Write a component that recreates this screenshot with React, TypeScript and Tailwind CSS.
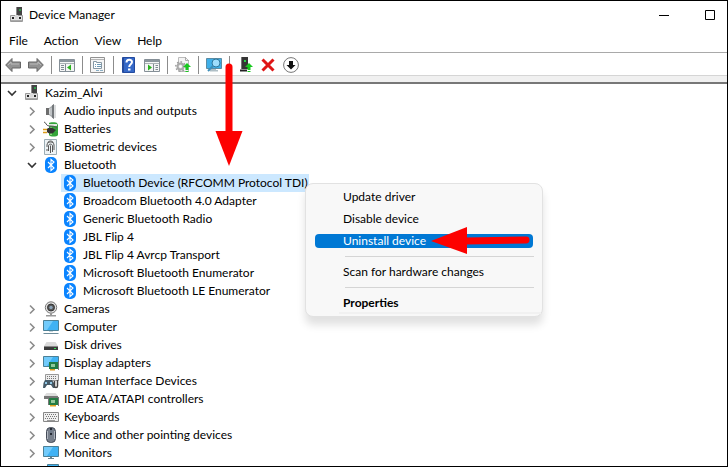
import { useState, type ReactNode } from 'react';

type IconProps = { children: ReactNode; className?: string };

function Icon({ children, className = 'size-4' }: IconProps) {
	return (
		<svg viewBox="0 0 16 16" fill="none" aria-hidden="true" className={`${className} shrink-0`}>
			{children}
		</svg>
	);
}

function ComputerTowerIcon() {
	return (
		<Icon>
			<path d="M7 0h6v9H7z" fill="#444" />
			<path d="M7 0h1v9H7z" fill="#8b8b8b" />
			<path d="M10 2h2v2h-2z" fill="#2f9d4a" />
			<path d="M1.500 8.500h12v6h-12z" fill="#e3e3e3" stroke="#9a9a9a" />
			<path d="M3 10h2v2H3zM10 10h2v2h-2z" fill="#222" />
			<path d="M6 8h3v4H6z" fill="#d9d9d9" />
			<path d="M2 13h11v1H2z" fill="#aaa" />
		</Icon>
	);
}

function SpeakerIcon() {
	return (
		<Icon>
			<path d="M3 5h3v7H3z" fill="#6d6d6d" />
			<path d="M6 5l5-4v15l-5-4z" fill="#a9adb0" />
			<path d="M9 2.500L11 1v15l-2-1.500z" fill="#74787b" />
			<path d="M6.500 6v5M8 5v7" stroke="#d6d9db" />
			<path d="M12 2v13" stroke="#b9bcbe" />
		</Icon>
	);
}

function BatteryIcon() {
	return (
		<Icon>
			<path d="M6 2c0-1 8-1 8 0l1 2v10c-1 2-8 2-9 0V4z" fill="#35a53b" />
			<path d="M6 3h8v2H6z" fill="#dfe8df" />
			<path d="M7 6h2v8H7z" fill="#86d978" />
			<path d="M1 1c2 0 2 4 5 4s6 0 8 2" stroke="#555" />
			<path d="M4 8c2-2 6-1 7 0l2 1-2 2c-1 2-5 2-7 0z" fill="#333" />
			<path d="M0 8.500h4M0 11.500h4" stroke="#dc9c1a" strokeWidth="1.500" />
		</Icon>
	);
}

function FingerprintIcon() {
	return (
		<Icon>
			<path d="M1.500.5h12v15h-12z" fill="#eef3f5" stroke="#9cadb5" />
			<path
				d="M4 8V6c0-4 7-4 7 0v5M5.500 12V7c0-2.500 4-2.500 4 0v6M7.500 6.500V14M4 10v2M4.500 3.500c2-2 4-2 6 0"
				stroke="#585858"
			/>
		</Icon>
	);
}

function BluetoothIcon() {
	return (
		<Icon>
			<rect x="2" width="12" height="16" rx="5" fill="#0a84ff" />
			<path d="M5 5l6 6-3 2.500v-11L11 5l-6 6" stroke="#fff" strokeWidth="1.100" />
		</Icon>
	);
}

function CameraIcon() {
	return (
		<Icon>
			<circle cx="8" cy="6.500" r="5.700" fill="#e1e1e1" stroke="#777" />
			<circle cx="8" cy="6.500" r="3.500" fill="#555" stroke="#333" />
			<circle cx="8" cy="6.500" r="1.700" fill="#8ba3b9" />
			<path d="M7 12h2v2h4v1.500H3V14h4z" fill="#999" />
		</Icon>
	);
}

function Screen() {
	return (
		<>
			<path d="M.5 1.500h15v10H.5z" fill="#3fb2f4" stroke="#4b8096" />
			<path d="M1 2h9l-6 9H1z" fill="#72cbfb" />
		</>
	);
}

function DesktopIcon() {
	return (
		<Icon>
			<Screen />
			<path d="M6 12h4v1H6z" fill="#c5d5dc" />
			<path d="M1 14h14l1 1H0z" fill="#6d8c9a" />
		</Icon>
	);
}

function MonitorIcon() {
	return (
		<Icon>
			<Screen />
			<path d="M7 12h2v1h2v1H5v-1h2z" fill="#66838f" />
		</Icon>
	);
}

function NetworkIcon() {
	return (
		<Icon>
			<path d="M4.500 1.500h11v9h-11z" fill="#3fb2f4" stroke="#4b8096" />
			<path d="M9 11h2v2H9zM6 13h8v1H6z" fill="#66838f" />
		</Icon>
	);
}

function DiskIcon() {
	return (
		<Icon>
			<path d="M3.500 5h9L15 9H1z" fill="#dadada" />
			<path d="M1 9h14v4H1z" fill="#3b3b3b" />
			<path d="M1 9h14v1H1z" fill="#888" />
			<path d="M11 11h2v1h-2z" fill="#36e052" />
		</Icon>
	);
}

function DisplayAdapterIcon() {
	return (
		<Icon>
			<Screen />
			<path d="M6 7h9v7H6z" fill="#207b43" />
			<path d="M8 9h4v3H8z" fill="#8ec79b" />
			<path d="M15 6h1v9h-1z" fill="#777" />
			<path d="M7 14h5v1.500H7z" fill="#dc9820" />
		</Icon>
	);
}

function GamepadIcon() {
	return (
		<Icon>
			<path d="M2.500 1.500h13v6h-13z" fill="#eee" stroke="#999" />
			<path d="M4 3.500h10M4 5.500h10" stroke="#777" strokeDasharray="1 1" />
			<path d="M2 7h7l2 3 1 5h-2l-2-3H4l-2 3H0l.500-5z" fill="#465b68" />
			<path d="M2 9h2v2H2zM7 9h2v2H7z" fill="#8fc6e5" />
			<path d="M11.500 8v5c0 2 3 2 3 0V7" stroke="#444" strokeWidth="1.500" />
		</Icon>
	);
}

function ControllerCardIcon() {
	return (
		<Icon>
			<path d="M3.500 2h9L15 5H1z" fill="#ddd" />
			<path d="M1 5h14v3H1z" fill="#777" />
			<path d="M6 7h9v7H6z" fill="#237b43" />
			<path d="M8 9h4v3H8z" fill="#95c89c" />
			<path d="M4 6h2v8H5V7H4zM15 6h1v9h-1z" fill="#777" />
			<path d="M7 14h6v1.500H7z" fill="#e2a020" />
		</Icon>
	);
}

function KeyboardIcon() {
	return (
		<Icon>
			<path d="M.5 3.500h15v9H.5z" fill="#f0f0f0" stroke="#888" />
			<path d="M2 5.500h12M3 7.500h11M2 9.500h12" stroke="#777" strokeDasharray="1 1" />
			<path d="M4 11.500h8" stroke="#999" />
		</Icon>
	);
}

function MouseIcon() {
	return (
		<Icon>
			<rect x="3.500" y=".5" width="9" height="15" rx="4" fill="#777f8b" stroke="#444b57" />
			<path d="M4.500 4v8M11.500 4v8" stroke="#b0b6bf" />
			<path d="M8 1v7" stroke="#262b35" strokeWidth="2" />
			<path d="M8 3v3" stroke="#b7c8dc" />
		</Icon>
	);
}

function ArrowIcon({ flip = false }: { flip?: boolean }) {
	return (
		<Icon className={flip ? 'size-4 -scale-x-100' : 'size-4'}>
			<path d="M.7 8L7 1.500V5h8.500v6H7v3.500z" fill="#929292" stroke="#666" />
			<path d="M3 8l3-3v2h8" stroke="#b9b9b9" />
		</Icon>
	);
}

function ConsoleTreeIcon({ flip = false }: { flip?: boolean }) {
	return (
		<Icon>
			<path d="M.5 2.500h15v12H.5z" fill="#f4f5f5" stroke="#858f97" />
			<path d="M1 3h14v2H1z" fill="#8b969d" />
			<path d="M1 6.500h14" stroke="#aab1b5" />
			{flip ? (
				<>
					<path d="M9.500 7v7M11.500 8.500H14M11.500 10.500H14M11.500 12.500H14" stroke="#7f8a92" />
					<path d="M4 7.500l4 3-4 3z" fill="#29b21e" />
				</>
			) : (
				<>
					<path d="M6.500 7v7M2 8.500h3M2 10.500h3M2 12.500h3" stroke="#7f8a92" />
					<path d="M12 7.500l-4 3 4 3z" fill="#29b21e" />
				</>
			)}
		</Icon>
	);
}

function PropertiesIcon() {
	return (
		<Icon>
			<path d="M.5.5h14v15H.5z" fill="#f6f6f6" stroke="#929292" />
			<path d="M1 2.500h13" stroke="#b5b5b5" />
			<path d="M3.500 4.500h3v1h5v6h-8z" fill="#fff" stroke="#8798a4" />
			<path d="M5 7.500h1M7 7.500h4M5 9.500h1M7 9.500h4" stroke="#6f9bb7" />
			<path d="M6 13.500h3M10 13.500h3" stroke="#8aaec4" />
		</Icon>
	);
}

function HelpIcon() {
	return (
		<Icon>
			<path d="M1.500.5h12v15h-12z" fill="#3568c7" stroke="#234a9e" />
			<path d="M2 1h1v14H2z" fill="#284b98" />
			<path d="M5.500 5.500C5.500 2 11 2 11 5c0 2.200-2.800 2.200-2.800 5" stroke="#fff" strokeWidth="2" />
			<path d="M7 11.500h2.500v2H7z" fill="#fff" />
		</Icon>
	);
}

function GreenUpload() {
	return (
		<>
			<path d="M12 6l4 4h-2.500v2h-3v-2H8z" fill="#18c91e" />
			<path d="M10.500 12.500h3M10.500 14.500h3" stroke="#18c91e" />
		</>
	);
}

function UpdateDriverIcon() {
	return (
		<Icon>
			<path d="M3.500.5h7l3 3v11h-10z" fill="#f4f4f4" stroke="#bbb" />
			<path d="M10.500 0v3.500H14" stroke="#aaa" />
			<circle cx="5.500" cy="9.500" r="3" fill="#ddd" stroke="#aaa" strokeWidth="2" />
			<circle cx="5.500" cy="9.500" r="4.700" stroke="#999" strokeWidth="1.400" strokeDasharray="1.600 2" />
			<circle cx="5.500" cy="9.500" r="1.200" fill="#fff" />
			<GreenUpload />
		</Icon>
	);
}

function ScanHardwareIcon() {
	return (
		<Icon>
			<path d="M.5 1.500h15v10H.5z" fill="#3eafe9" stroke="#5b8ca4" />
			<path d="M5 12h5v1h2v1.500H4V13h1z" fill="#b0bfc6" />
			<circle cx="10" cy="6" r="4" fill="#9dddfc" stroke="#2d779d" />
			<path d="M7 9l-5 5" stroke="#3d8eb8" strokeWidth="2" />
		</Icon>
	);
}

function AddDriverIcon() {
	return (
		<Icon>
			<path d="M4 0h7v12H4z" fill="#353535" />
			<path d="M4 0h1v12H4z" fill="#777" />
			<path d="M7 3h2v2H7z" fill="#29d346" />
			<path d="M3 13.500h7" stroke="#222" strokeWidth="2" />
			<GreenUpload />
		</Icon>
	);
}

function RemoveIcon() {
	return (
		<Icon>
			<path d="M2.500 2.500l11 11M13.500 2.500l-11 11" stroke="#df1515" strokeWidth="3" />
		</Icon>
	);
}

function DisableIcon() {
	return (
		<Icon>
			<circle cx="8" cy="8" r="7.400" fill="#fff" stroke="#777" />
			<path d="M6 4h4v4h2.500L8 12.500 3.500 8H6z" fill="#111" />
		</Icon>
	);
}

function Chevron({ open }: { open: boolean }) {
	return (
		<Icon>
			{open ? (
				<path d="M4 6l4 4 4-4" stroke="#333" strokeWidth="1.600" />
			) : (
				<path d="M6 4.500l4 4-4 4" stroke="#8c8c8c" strokeWidth="1.600" />
			)}
		</Icon>
	);
}

type Category = { name: string; icon: ReactNode; devices?: string[] };

const categories: Category[] = [
	{ name: 'Audio inputs and outputs', icon: <SpeakerIcon /> },
	{ name: 'Batteries', icon: <BatteryIcon /> },
	{ name: 'Biometric devices', icon: <FingerprintIcon /> },
	{
		name: 'Bluetooth',
		icon: <BluetoothIcon />,
		devices: [
			'Bluetooth Device (RFCOMM Protocol TDI)',
			'Broadcom Bluetooth 4.0 Adapter',
			'Generic Bluetooth Radio',
			'JBL Flip 4',
			'JBL Flip 4 Avrcp Transport',
			'Microsoft Bluetooth Enumerator',
			'Microsoft Bluetooth LE Enumerator',
		],
	},
	{ name: 'Cameras', icon: <CameraIcon /> },
	{ name: 'Computer', icon: <DesktopIcon /> },
	{ name: 'Disk drives', icon: <DiskIcon /> },
	{ name: 'Display adapters', icon: <DisplayAdapterIcon /> },
	{ name: 'Human Interface Devices', icon: <GamepadIcon /> },
	{ name: 'IDE ATA/ATAPI controllers', icon: <ControllerCardIcon /> },
	{ name: 'Keyboards', icon: <KeyboardIcon /> },
	{ name: 'Mice and other pointing devices', icon: <MouseIcon /> },
	{ name: 'Monitors', icon: <MonitorIcon /> },
];

const tools: { label: string; icon: ReactNode; divider?: boolean }[] = [
	{ label: 'Back', icon: <ArrowIcon /> },
	{ label: 'Forward', icon: <ArrowIcon flip />, divider: true },
	{ label: 'Show console tree', icon: <ConsoleTreeIcon />, divider: true },
	{ label: 'Properties', icon: <PropertiesIcon />, divider: true },
	{ label: 'Help', icon: <HelpIcon /> },
	{ label: 'Show action pane', icon: <ConsoleTreeIcon flip />, divider: true },
	{ label: 'Update driver', icon: <UpdateDriverIcon />, divider: true },
	{ label: 'Scan for hardware changes', icon: <ScanHardwareIcon />, divider: true },
	{ label: 'Add drivers', icon: <AddDriverIcon /> },
	{ label: 'Uninstall device', icon: <RemoveIcon /> },
	{ label: 'Disable device', icon: <DisableIcon /> },
];

function TitleBar() {
	return (
		<header className="flex h-7 items-center pl-2 pr-3">
			<ComputerTowerIcon />
			<h1 className="ml-1 flex-1">Device Manager</h1>
			<button type="button" aria-label="Minimize" className="mr-9">
				<svg viewBox="0 0 10 10" className="size-[10px]">
					<path d="M0 5.500h10" stroke="#000" />
				</svg>
			</button>
			<button type="button" aria-label="Maximize">
				<svg viewBox="0 0 10 10" className="size-[10px]">
					<path d="M.5.5h9v9h-9z" fill="none" stroke="#000" />
				</svg>
			</button>
		</header>
	);
}

function Toolbar() {
	return (
		<div className="flex h-6 shrink-0 items-center gap-[7px] border-y border-t-[#a9a9a9] border-b-[#d5d5d5] pl-1 pt-px">
			{tools.map((tool) => (
				<div key={tool.label} className="flex items-center gap-[7px]">
					<button type="button" aria-label={tool.label}>
						{tool.icon}
					</button>
					{tool.divider && <span className="h-[18px] w-px bg-[#8c8c8c]" />}
				</div>
			))}
		</div>
	);
}

function CategoryItem({ category }: { category: Category }) {
	const [open, setOpen] = useState(Boolean(category.devices));

	return (
		<li>
			<div className="flex h-[18px] items-center">
				<button
					type="button"
					aria-label={`Toggle ${category.name}`}
					aria-expanded={open}
					onClick={() => setOpen(!open)}
					className="mr-[3px]"
				>
					<Chevron open={open} />
				</button>
				{category.icon}
				<span className="ml-[5px]">{category.name}</span>
			</div>
			{open && category.devices && (
				<ul className="pl-[37px]">
					{category.devices.map((device, index) => (
						<li
							key={device}
							className={
								index === 0
									? 'flex h-[18px] w-fit items-center bg-[#cce8ff] px-px'
									: 'flex h-[18px] w-fit items-center px-px'
							}
						>
							<BluetoothIcon />
							<span className="ml-[5px]">{device}</span>
						</li>
					))}
				</ul>
			)}
		</li>
	);
}

function DeviceTree() {
	return (
		<main className="min-h-0 flex-1 overflow-hidden whitespace-nowrap pl-[3px]">
			<div className="flex h-[18px] items-center">
				<button type="button" aria-label="Toggle Kazim_Alvi" className="mr-1">
					<Chevron open />
				</button>
				<ComputerTowerIcon />
				<span className="ml-[5px]">Kazim_Alvi</span>
			</div>
			<ul className="pl-5">
				{categories.map((category) => (
					<CategoryItem key={category.name} category={category} />
				))}
			</ul>
			<div className="flex h-[18px] items-center pl-[39px]">
				<NetworkIcon />
			</div>
		</main>
	);
}

function ContextMenu() {
	return (
		<div
			role="menu"
			className="absolute left-[304px] top-[182px] w-[238px] rounded-lg border border-[#e2e2e2] bg-[#f8f8f8] px-[9px] pb-[2px] pt-[2px] shadow-[0_8px_8px_rgba(0,0,0,0.12)]"
		>
			<button type="button" role="menuitem" className="flex h-[22px] w-full items-center pl-7">
				Update driver
			</button>
			<button type="button" role="menuitem" className="flex h-[22px] w-full items-center pl-7">
				Disable device
			</button>
			<button
				type="button"
				role="menuitem"
				className="mb-2 mt-1 flex h-[14px] w-full items-center rounded bg-[#0078d4] pl-7 text-white"
			>
				Uninstall device
			</button>
			<hr className="-mr-px ml-[30px] border-[#d5d5d5]" />
			<button type="button" role="menuitem" className="flex h-[30px] w-full items-center pl-7">
				Scan for hardware changes
			</button>
			<hr className="-mr-px ml-[30px] border-[#d5d5d5]" />
			<button type="button" role="menuitem" className="flex h-6 w-full items-center pl-7 pt-[6px] font-bold">
				Properties
			</button>
			<div className="-mr-2 ml-6 h-[2px] bg-[#f1f1f1]" />
		</div>
	);
}

function Annotations() {
	return (
		<svg
			viewBox="0 0 728 467"
			className="pointer-events-none absolute -left-px -top-px h-[467px] w-[728px]"
			aria-hidden="true"
		>
			<g fill="#fd0100" stroke="#fd0100">
				<path d="M229 67v64" strokeWidth="7" strokeLinecap="round" />
				<path d="M215.500 131h27L229 166z" stroke="none" />
				<path d="M466 241l60-1" strokeWidth="7" strokeLinecap="round" />
				<path d="M431 241l36-14v27z" stroke="none" />
			</g>
		</svg>
	);
}

export default function App() {
	return (
		<div className="relative flex h-screen flex-col overflow-hidden border border-black bg-white font-['Lato','Open_Sans',sans-serif] text-[12px] leading-[18px] text-black">
			<TitleBar />
			<nav className="flex h-[23px] shrink-0 items-center gap-4 pl-2">
				<button type="button">File</button>
				<button type="button">Action</button>
				<button type="button">View</button>
				<button type="button">Help</button>
			</nav>
			<Toolbar />
			<div className="h-2 shrink-0 border-b-2 border-[#777] bg-[#f0f0f0]" />
			<DeviceTree />
			<ContextMenu />
			<Annotations />
		</div>
	);
}
